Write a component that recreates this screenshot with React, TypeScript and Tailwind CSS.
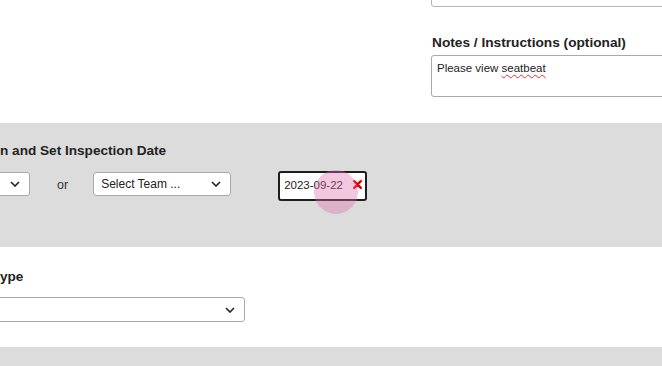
import React from "react";

const Chevron = () => (
  <svg width="10" height="6" viewBox="0 0 10 6" className="shrink-0">
    <path d="M1 1 L5 5 L9 1" fill="none" stroke="#222" strokeWidth="1.6" />
  </svg>
);

function SelectBox({ className, label }: { className: string; label?: string }) {
  return (
    <div
      className={`flex items-center justify-between bg-white border border-[#a9a9a9] rounded-[3px] pl-[7px] pr-[9px] text-[12px] text-[#222] ${className}`}
    >
      <span>{label}</span>
      <Chevron />
    </div>
  );
}

export default function App() {
  return (
    <div
      className="relative w-[662px] h-[366px] overflow-hidden bg-white text-[#222]"
      style={{ fontFamily: '"Liberation Sans", Arial, sans-serif' }}
    >
      {/* Top white section */}
      <div className="h-[123px] pl-[431px] flex flex-col">
        <div className="mt-[-24px] h-[31px] w-[260px] border border-[#b5b5b5] rounded-[3px]" />
        <div className="mt-[26px] ml-[1px] text-[13.7px] font-bold leading-[20px]">Notes / Instructions (optional)</div>
        <div className="mt-[2px] h-[42px] w-[260px] border border-[#a9a9a9] rounded-[3px] px-[5px] pt-[4px] text-[11.5px] leading-[16px]">
          Please view{" "}
          <span className="underline decoration-wavy decoration-[#e03030] decoration-[1px] underline-offset-[2px]">
            seatbeat
          </span>
        </div>
      </div>

      {/* Gray band */}
      <div className="h-[124px] bg-[#dcdcdc] pt-[18px]">
        <div className="text-[13.6px] font-bold leading-[20px]">n and Set Inspection Date</div>
        <div className="flex items-start mt-[11px] ml-[-130px]">
          <SelectBox className="w-[160px] h-[24px]" />
          <span className="ml-[27px] mt-[4px] text-[12.5px] text-[#333]">or</span>
          <SelectBox className="w-[138px] h-[24px] ml-[25px]" label="Select Team ..." />
          <div className="relative ml-[47px] mt-[-1px] w-[89px] h-[30px] bg-white border-2 border-[#1e1e1e] rounded-[3px] flex items-center pl-[4px] text-[11.5px] text-[#222]">
            2023-09-22
            <svg width="9" height="9" viewBox="0 0 9 9" className="absolute right-[3px] top-[7px]">
              <path d="M1.2 1.2 L7.8 7.8 M7.8 1.2 L1.2 7.8" stroke="#e00000" strokeWidth="2.4" strokeLinecap="round" />
            </svg>
          </div>
        </div>
      </div>

      {/* White section */}
      <div className="h-[100px] pt-[20px]">
        <div className="text-[13.6px] font-bold leading-[20px]">ype</div>
        <SelectBox className="mt-[10px] ml-[-100px] w-[345px] h-[25px]" />
      </div>

      {/* Bottom gray band */}
      <div className="h-[30px] bg-[#dcdcdc]" />

      {/* Click indicator */}
      <div className="absolute left-[314px] top-[170px] w-[44px] h-[44px] rounded-full bg-[rgba(222,110,170,0.38)]" />
    </div>
  );
}
